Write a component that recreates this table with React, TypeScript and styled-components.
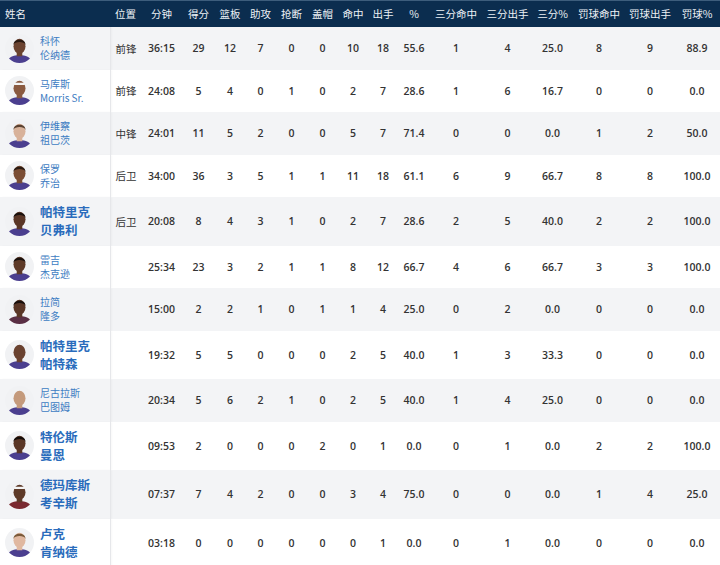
import styled, { createGlobalStyle } from "styled-components";

const GlobalStyle = createGlobalStyle`
  html, body {
    margin: 0;
    padding: 0;
    background: #ffffff;
  }
  body {
    font-family: "Open Sans", "Noto Sans CJK SC", sans-serif;
    color: #333333;
  }
`;

const Table = styled.table`
  width: 720px;
  border-collapse: collapse;
  table-layout: fixed;
`;

const HeadRow = styled.tr`
  height: 27px;
  background: #0b2d4f;
  box-shadow: inset 0 1px 0 #3d5d7c;
`;

const Th = styled.th<{ $left?: boolean }>`
  padding: 0;
  padding-left: ${(p) => (p.$left ? "5px" : "0")};
  text-align: ${(p) => (p.$left ? "left" : "center")};
  font-family: "Noto Sans CJK SC", sans-serif;
  font-size: 10.5px;
  font-weight: 400;
  color: #eef2f6;
  white-space: nowrap;
`;

const Row = styled.tr<{ $tall: boolean; $shade: boolean }>`
  height: ${(p) => (p.$tall ? "48.5px" : "42.5px")};
  background: ${(p) => (p.$shade ? "#f3f4f6" : "#ffffff")};
`;

const NameCell = styled.td`
  padding: 0 0 0 5px;
  border-right: 1px solid #e6e7ea;
  box-shadow: 2px 0 2px rgba(0, 0, 0, 0.03);
`;

const NameWrap = styled.div`
  display: flex;
  align-items: center;
  gap: 6px;
`;

const Names = styled.div<{ $bold: boolean }>`
  display: flex;
  flex-direction: column;
  font-family: "Noto Sans CJK SC", sans-serif;
  font-size: ${(p) => (p.$bold ? "12.5px" : "10px")};
  line-height: ${(p) => (p.$bold ? "18px" : "14px")};
  font-weight: ${(p) => (p.$bold ? 700 : 400)};
  color: ${(p) => (p.$bold ? "#2a6cbc" : "#3d7cc2")};
  white-space: nowrap;
`;

const PosCell = styled.td`
  padding-left: 5px;
  font-family: "Noto Sans CJK SC", sans-serif;
  font-size: 10.5px;
  color: #333333;
`;

const Td = styled.td`
  text-align: center;
  font-size: 10.5px;
  font-weight: 600;
  color: #333333;
  white-space: nowrap;
`;

type Look = { skin: string; jersey: string; hair?: string; band?: boolean };

const Avatar = ({ skin, jersey, hair, band }: Look) => (
  <svg width="29" height="29" viewBox="0 0 28 28">
    <defs>
      <clipPath id="av">
        <circle cx="14" cy="14" r="14" />
      </clipPath>
    </defs>
    <circle cx="14" cy="14" r="14" fill="#f1f2f4" />
    <g clipPath="url(#av)">
      <path d="M2 28 C3 22 8 20.5 14 20.5 C20 20.5 25 22 26 28 Z" fill={jersey} />
      <rect x="11.3" y="15" width="5.4" height="6.5" fill={skin} />
      <ellipse cx="14" cy="11.8" rx="5.8" ry="7.2" fill={skin} />
      {hair && <path d="M8.2 10.5 C7.8 3.8 20.2 3.8 19.8 10.5 C18.8 6.8 9.2 6.8 8.2 10.5 Z" fill={hair} />}
      {band && <rect x="8.2" y="6.4" width="11.6" height="2.2" rx="1" fill="#f4f4f4" />}
    </g>
  </svg>
);

type Player = {
  first: string;
  last: string;
  bold?: boolean;
  pos: string;
  look: Look;
  stats: string[];
};

const players: Player[] = [
  { first: "科怀", last: "伦纳德", pos: "前锋", look: { skin: "#6b4330", jersey: "#4b3f8f", hair: "#2a1a12" }, stats: ["36:15", "29", "12", "7", "0", "0", "10", "18", "55.6", "1", "4", "25.0", "8", "9", "88.9"] },
  { first: "马库斯", last: "Morris Sr.", pos: "前锋", look: { skin: "#8a5a40", jersey: "#4b3f8f", band: true }, stats: ["24:08", "5", "4", "0", "1", "0", "2", "7", "28.6", "1", "6", "16.7", "0", "0", "0.0"] },
  { first: "伊维察", last: "祖巴茨", pos: "中锋", look: { skin: "#d8b29a", jersey: "#4b3f8f", hair: "#5a4232" }, stats: ["24:01", "11", "5", "2", "0", "0", "5", "7", "71.4", "0", "0", "0.0", "1", "2", "50.0"] },
  { first: "保罗", last: "乔治", pos: "后卫", look: { skin: "#7a4d34", jersey: "#4b3f8f", hair: "#2a1a12" }, stats: ["34:00", "36", "3", "5", "1", "1", "11", "18", "61.1", "6", "9", "66.7", "8", "8", "100.0"] },
  { first: "帕特里克", last: "贝弗利", bold: true, pos: "后卫", look: { skin: "#5a3626", jersey: "#4b3f8f", hair: "#1a100c" }, stats: ["20:08", "8", "4", "3", "1", "0", "2", "7", "28.6", "2", "5", "40.0", "2", "2", "100.0"] },
  { first: "雷吉", last: "杰克逊", pos: "", look: { skin: "#5e3a28", jersey: "#4b3f8f", hair: "#1a100c" }, stats: ["25:34", "23", "3", "2", "1", "1", "8", "12", "66.7", "4", "6", "66.7", "3", "3", "100.0"] },
  { first: "拉简", last: "隆多", pos: "", look: { skin: "#5a3626", jersey: "#5a2f44", hair: "#1a100c" }, stats: ["15:00", "2", "2", "1", "0", "1", "1", "4", "25.0", "0", "2", "0.0", "0", "0", "0.0"] },
  { first: "帕特里克", last: "帕特森", bold: true, pos: "", look: { skin: "#6a4230", jersey: "#4b3f8f" }, stats: ["19:32", "5", "5", "0", "0", "0", "2", "5", "40.0", "1", "3", "33.3", "0", "0", "0.0"] },
  { first: "尼古拉斯", last: "巴图姆", pos: "", look: { skin: "#c49a7c", jersey: "#4b3f8f" }, stats: ["20:34", "5", "6", "2", "1", "0", "2", "5", "40.0", "1", "4", "25.0", "0", "0", "0.0"] },
  { first: "特伦斯", last: "曼恩", bold: true, pos: "", look: { skin: "#5a3626", jersey: "#4b3f8f", hair: "#140c08" }, stats: ["09:53", "2", "0", "0", "0", "2", "0", "1", "0.0", "0", "1", "0.0", "2", "2", "100.0"] },
  { first: "德玛库斯", last: "考辛斯", bold: true, pos: "", look: { skin: "#5e3a28", jersey: "#7a2a30", band: true }, stats: ["07:37", "7", "4", "2", "0", "0", "3", "4", "75.0", "0", "0", "0.0", "1", "4", "25.0"] },
  { first: "卢克", last: "肯纳德", bold: true, pos: "", look: { skin: "#e0b8a0", jersey: "#4b3f8f", hair: "#7a5a3a" }, stats: ["03:18", "0", "0", "0", "0", "0", "0", "1", "0.0", "0", "1", "0.0", "0", "0", "0.0"] },
];

const columns = [
  { label: "姓名", width: 110 },
  { label: "位置", width: 31 },
  { label: "分钟", width: 41 },
  { label: "得分", width: 33 },
  { label: "篮板", width: 30 },
  { label: "助攻", width: 31 },
  { label: "抢断", width: 31 },
  { label: "盖帽", width: 31 },
  { label: "命中", width: 30 },
  { label: "出手", width: 30 },
  { label: "%", width: 32 },
  { label: "三分命中", width: 52 },
  { label: "三分出手", width: 51 },
  { label: "三分%", width: 39 },
  { label: "罚球命中", width: 54 },
  { label: "罚球出手", width: 48 },
  { label: "罚球%", width: 46 },
];

export default function App() {
  return (
    <>
      <GlobalStyle />
      <Table>
        <colgroup>
          {columns.map((c) => (
            <col key={c.label} style={{ width: c.width }} />
          ))}
        </colgroup>
        <thead>
          <HeadRow>
            {columns.map((c, i) => (
              <Th key={c.label} $left={i < 2}>
                {c.label}
              </Th>
            ))}
          </HeadRow>
        </thead>
        <tbody>
          {players.map((p, i) => (
            <Row key={p.first + p.last} $tall={!!p.bold} $shade={i % 2 === 0}>
              <NameCell>
                <NameWrap>
                  <Avatar {...p.look} />
                  <Names $bold={!!p.bold}>
                    <span>{p.first}</span>
                    <span>{p.last}</span>
                  </Names>
                </NameWrap>
              </NameCell>
              <PosCell>{p.pos}</PosCell>
              {p.stats.map((s, j) => (
                <Td key={j}>{s}</Td>
              ))}
            </Row>
          ))}
        </tbody>
      </Table>
    </>
  );
}
